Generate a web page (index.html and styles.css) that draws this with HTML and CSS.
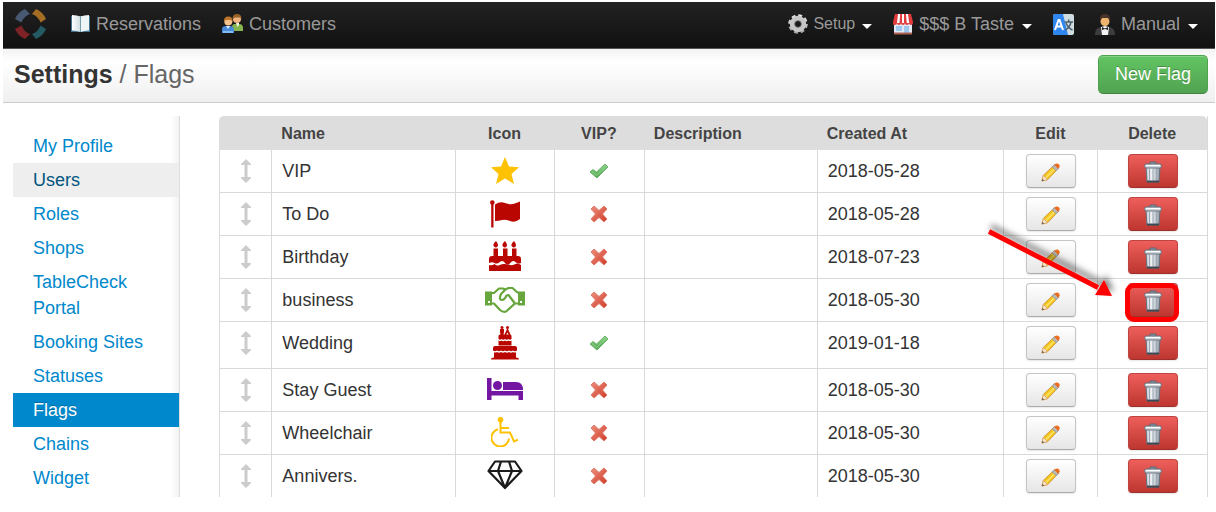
FILE: index.html
```html
<!DOCTYPE html>
<html lang="en">
<head>
<meta charset="utf-8">
<title>Settings / Flags</title>
<link rel="stylesheet" href="styles.css">
</head>
<body>
<svg class="defs" aria-hidden="true">
  <defs>
    <linearGradient id="g-tick" x1="0" y1="0" x2="0" y2="1"><stop offset="0" stop-color="#8fd48a"/><stop offset="1" stop-color="#4fa552"/></linearGradient>
    <linearGradient id="g-cross" x1="0" y1="0" x2="1" y2="1"><stop offset="0" stop-color="#ee9080"/><stop offset="1" stop-color="#cf3a28"/></linearGradient>
    <linearGradient id="g-can" x1="0" y1="0" x2="1" y2="0"><stop offset="0" stop-color="#c3ccd5"/><stop offset=".4" stop-color="#eef1f4"/><stop offset="1" stop-color="#8f9ba8"/></linearGradient>
    <linearGradient id="g-gear" x1="0" y1="0" x2="0" y2="1"><stop offset="0" stop-color="#e6e6e6"/><stop offset="1" stop-color="#a2a2a2"/></linearGradient>
    <linearGradient id="g-page" x1="0" y1="0" x2="1" y2="0"><stop offset="0" stop-color="#ffffff"/><stop offset="1" stop-color="#cfdde2"/></linearGradient>
    <filter id="f-shadow" x="-20%" y="-20%" width="140%" height="140%"><feDropShadow dx="2" dy="-5" stdDeviation="3" flood-color="#000" flood-opacity=".5"/></filter>
  </defs>
  <symbol id="move" viewBox="0 0 10 24"><path fill="#ccc" d="M5 0 10 5v1H6.500v12H10v1l-5 5-5-5v-1h3.500V6H0V5z"/></symbol>
  <symbol id="tick" viewBox="0 0 20 16"><path d="M1 9 4 6.500l3.500 2.500L16 1l3 3L8 15z" fill="url(#g-tick)" stroke="#6ab56a" stroke-linejoin="round"/><path d="m3 8.500 4.500 4L17 3.500" fill="none" stroke="#8fd088"/></symbol>
  <symbol id="cross" viewBox="0 0 18 18"><path d="M1 4 4 1l5 4.500L14 1l3 3-4.500 5 4.500 5-3 3-5-4.500L4 17l-3-3 4.500-5z" fill="url(#g-cross)" stroke="#e07a68" stroke-linejoin="round"/></symbol>
  <symbol id="pencil" viewBox="0 0 20 20"><path d="m1 19 1.500-6L14 2l4 4L7 17.500z" fill="#f3c31c" stroke="#d39a4a"/><path d="m5 15.500 9.500-9.500" stroke="#fae060" stroke-width="2"/><path d="M1 19l1.500-6 4.500 4.500z" fill="#fbe6cc" stroke="#d9a66c"/><path d="m1 19 .6-2.300L3.300 18.400z" fill="#555"/><path d="m11.800 4 2.700-2.500 4.200 4L16 8.200z" fill="#b9b9b9" stroke="#999"/><path d="m14 2 .8-.8Q17-.2 19 1.500q1.500 2 0 3.500l-1 1z" fill="#ee6c1f"/></symbol>
  <symbol id="trash" viewBox="0 0 18 22"><path d="M6 3.500V1h6v2.500" fill="#8b98a4" stroke="#5d6975"/><path d="m2 6 1 15h12l1-15z" fill="url(#g-can)" stroke="#64707c"/><path d="M5.500 8v11M9 8v11M12.500 8v11" stroke="#9aa6b1"/><path d="M3 20.500h12" stroke="#3d4852" stroke-width="2"/><rect x=".7" y="3" width="16.600" height="4" rx="1.500" fill="#ced6dc" stroke="#65717d"/><path d="M2 4.500h14" stroke="#fff"/></symbol>
</svg>

<nav class="navbar">
  <a class="logo" href="#" aria-label="Home">
    <svg width="32" height="32" viewBox="0 0 32 32"><path fill="#475973" d="M0 11Q3 4 10 1l5 5q-6 2-8.500 8.500z"/><path fill="#a56d24" d="M21 1q7 3 10 10l-5.500 3.500Q23 8 17 6z"/><path fill="#7e2325" d="M0 21q3 7 10 10l5-5q-6-2-8.500-8.500z"/><path fill="#245a63" d="M21 31q7-3 10-10l-5.500-3.500Q23 24 17 26z"/></svg>
  </a>
  <a class="nav-link" href="#">
    <svg width="19" height="18" viewBox="0 0 19 18"><path d="M0 1h19v16H0z" fill="#44758e"/><path d="M1 0q5 0 8.500 1.500V17Q6 15.500 1 15.500z" fill="url(#g-page)"/><path d="M18 0q-5 0-8.500 1.500V17q3.500-1.500 8.500-1.500z" fill="#edf5f6"/><path d="M9.500 1.500V17" stroke="#799eaa"/></svg>
    Reservations
  </a>
  <a class="nav-link" href="#">
    <svg width="21" height="20" viewBox="0 0 21 20"><path d="M10 17v-4q0-3 3-3h4q4 0 4 4v3z" fill="#86b550"/><path d="M14 9h3v2l-1.500 2z" fill="#f0f4e8"/><circle cx="15" cy="5" r="4" fill="#f0b581"/><path d="M10.500 5q0-5 4.500-5t4.500 5L18 3.500h-5z" fill="#9a6224"/><path d="M0 19v-4q0-3 4-3h4q4 0 4 4v3z" fill="#4889d8"/><path d="M1 18h10" stroke="#83baf5" stroke-width="2"/><path d="M4 12h4l-2 3z" fill="#dcecff"/><circle cx="6.300" cy="7.500" r="4" fill="#f6c08c"/><path d="M2 8q-.5-5.500 4.300-5.500T10.500 8L9 6H4z" fill="#bd752c"/></svg>
    Customers
  </a>
  <div class="nav-right">
    <a class="nav-link small" href="#">
      <svg width="20" height="20" viewBox="0 0 20 20"><circle cx="10" cy="10" r="8" fill="none" stroke="url(#g-gear)" stroke-width="3.500" stroke-dasharray="3.600 2.683"/><circle cx="10" cy="10" r="5.700" fill="none" stroke="#c6c6c6" stroke-width="5"/><circle cx="10" cy="10" r="3.500" fill="none" stroke="#858585"/></svg>
      Setup <span class="caret"></span>
    </a>
    <a class="nav-link" href="#">
      <svg width="20" height="21" viewBox="0 0 20 21"><path d="M1 8h18v12H1z" fill="#e2e9f5"/><path d="M3 12h6v5H3zM11 12h5v8h-5z" fill="#9fc8ee"/><path d="M1 19.500h18" stroke="#ad6050" stroke-width="2"/><path d="M2 0h16l2 8q0 3-2 3t-2-2q0 2-2 2t-2-2q0 2-2 2t-2-2q0 2-2 2t-2-2q0 2-2 2-3 0-2-3z" fill="#e23a3a"/><path d="M5 0h2.200L6.500 9H4zM9 0h2v9H9zM13 0h2l1.200 9h-2.500z" fill="#fff"/></svg>
      $$$ B Taste <span class="caret"></span>
    </a>
    <a class="nav-link" href="#" aria-label="Language">
      <svg width="21" height="21" viewBox="0 0 21 21"><rect width="21" height="21" rx="2" fill="#cfdce0"/><path d="M2 0h8l5 21H2q-2 0-2-2V2Q0 0 2 0z" fill="#2f86ee"/><path d="M2 16 5.500 6h1L10 16M3.500 12.500h5" fill="none" stroke="#fff" stroke-width="2"/><path d="M11.500 8H20M15.700 5.500V8M18 8q-1 5-5.500 8M13 9q2 5 6.500 7" fill="none" stroke="#4a5f6c" stroke-width="1.500"/></svg>
    </a>
    <a class="nav-link" href="#">
      <svg width="20" height="21" viewBox="0 0 20 21"><path d="M0 20q0-6 6-7h8q6 1 6 7v1H0z" fill="#3d3d40"/><path d="m6 13 4-1 4 1-1 8H7z" fill="#f4f4f4"/><path d="m7 13 3 1.500 3-1.500v3l-3-1-3 1z" fill="#222"/><circle cx="10" cy="7.500" r="4.500" fill="#efb56c"/><path d="M5 7q-1-7 5-7t5 7l-2-3H7z" fill="#47352b"/></svg>
      Manual <span class="caret"></span>
    </a>
  </div>
</nav>

<header class="page-head">
  <h1><strong>Settings</strong> / Flags</h1>
  <button class="btn btn-new" type="button">New Flag</button>
</header>

<div class="layout">
  <aside class="sidebar">
    <a href="#">My Profile</a>
    <a class="hover" href="#">Users</a>
    <a href="#">Roles</a>
    <a href="#">Shops</a>
    <a href="#">TableCheck Portal</a>
    <a href="#">Booking Sites</a>
    <a href="#">Statuses</a>
    <a class="active" href="#">Flags</a>
    <a href="#">Chains</a>
    <a href="#">Widget</a>
  </aside>

  <main class="content">
    <table class="flags">
      <colgroup><col class="c-move"><col class="c-name"><col class="c-icon"><col class="c-vip"><col class="c-desc"><col class="c-date"><col class="c-edit"><col class="c-del"></colgroup>
      <thead>
        <tr><th></th><th>Name</th><th class="mid">Icon</th><th class="mid">VIP?</th><th>Description</th><th>Created At</th><th class="mid">Edit</th><th class="mid">Delete</th></tr>
      </thead>
      <tbody>
        <tr>
          <td><span class="cell mid"><svg width="10" height="24"><use href="#move"/></svg></span></td>
          <td>VIP</td>
          <td><span class="cell mid"><svg width="28" height="28" viewBox="0 0 28 28"><path fill="#fcc203" d="m14 0 4 9.500 10 .8-7.500 6.700L23 27l-9-5.500L5 27l2.500-10L0 10.300l10-.8z"/></svg></span></td>
          <td><span class="cell mid"><svg width="20" height="16"><use href="#tick"/></svg></span></td>
          <td></td><td>2018-05-28</td>
          <td><span class="cell mid"><button class="btn" type="button" aria-label="Edit"><svg width="19" height="19"><use href="#pencil"/></svg></button></span></td>
          <td><span class="cell mid"><button class="btn btn-del" type="button" aria-label="Delete"><svg width="18" height="22"><use href="#trash"/></svg></button></span></td>
        </tr>
        <tr>
          <td><span class="cell mid"><svg width="10" height="24"><use href="#move"/></svg></span></td>
          <td>To Do</td>
          <td><span class="cell mid"><svg width="30" height="28" viewBox="0 0 30 28"><g fill="#ba0600"><circle cx="2.300" cy="2.500" r="2.300"/><path d="M1.200 4h2.300v23.500H1.200zM5 4.500q5-3.500 10-1.500t9 .8 6-2.300V19q-5 4-10 2t-8-1-7 1z"/></g></svg></span></td>
          <td><span class="cell mid"><svg width="18" height="18"><use href="#cross"/></svg></span></td>
          <td></td><td>2018-05-28</td>
          <td><span class="cell mid"><button class="btn" type="button" aria-label="Edit"><svg width="19" height="19"><use href="#pencil"/></svg></button></span></td>
          <td><span class="cell mid"><button class="btn btn-del" type="button" aria-label="Delete"><svg width="18" height="22"><use href="#trash"/></svg></button></span></td>
        </tr>
        <tr>
          <td><span class="cell mid"><svg width="10" height="24"><use href="#move"/></svg></span></td>
          <td>Birthday</td>
          <td><span class="cell mid raised"><svg width="32" height="30" viewBox="0 0 32 30"><g fill="#ba0600"><path d="M7 0q3 3.500 1.500 5.500t-3.500 0T7 0zM16 0q3 3.500 1.500 5.500t-3.500 0T16 0zM25 0q3 3.500 1.500 5.500t-3.500 0T25 0z"/><path d="M4.500 7.500h4.500v7.500h5V7.500h4.500v7.500h4.500V7.500h4.500v7.500H29q3 0 3 3v4q-3 1.500-5.500-1t-5.300 1-5.200 0-5.200-1-5.300 1T0 22v-4q0-3 3-3h1.500z"/><path d="M0 24q3 1 5.500-1 2.500 2.500 5.300 1t5.200-1 5.300 1 5.200-1 5.500 1v6H0z"/></g></svg></span></td>
          <td><span class="cell mid"><svg width="18" height="18"><use href="#cross"/></svg></span></td>
          <td></td><td>2018-07-23</td>
          <td><span class="cell mid"><button class="btn" type="button" aria-label="Edit"><svg width="19" height="19"><use href="#pencil"/></svg></button></span></td>
          <td><span class="cell mid"><button class="btn btn-del" type="button" aria-label="Delete"><svg width="18" height="22"><use href="#trash"/></svg></button></span></td>
        </tr>
        <tr>
          <td><span class="cell mid"><svg width="10" height="24"><use href="#move"/></svg></span></td>
          <td>business</td>
          <td><span class="cell mid"><svg width="40" height="26" viewBox="0 0 40 26"><path fill="#67a63c" fill-rule="evenodd" d="M0 4.500h7v14H0zM33 4.500h7v14h-7zM3 14v2h2v-2zM35 14v2h2v-2z"/><path d="M6 6h3l5-4.500h4l2.500 1 3-1.500h4L33 6M6 16.500h3l6 6.500q3 2.500 6 1.500l9-8H34M20.500 2.500 16 7q-2.500 6 1 6 2.500 0 4.500-4.500l2-.5 6.500 8.500M23.500 8l1 1" fill="none" stroke="#67a63c" stroke-width="2.200" stroke-linejoin="round"/></svg></span></td>
          <td><span class="cell mid"><svg width="18" height="18"><use href="#cross"/></svg></span></td>
          <td></td><td>2018-05-30</td>
          <td><span class="cell mid"><button class="btn" type="button" aria-label="Edit"><svg width="19" height="19"><use href="#pencil"/></svg></button></span></td>
          <td><span class="cell mid callout"><button class="btn btn-del" type="button" aria-label="Delete"><svg width="18" height="22"><use href="#trash"/></svg></button>
            <span class="ring"></span>
            <svg class="arrow" width="126" height="70" viewBox="0 0 126 70"><g filter="url(#f-shadow)"><path d="m2 2.500 109 56" stroke="#f00" stroke-width="5"/><path fill="#f00" d="m125 67-17-1 9-15z"/></g></svg></span></td>
        </tr>
        <tr class="tall">
          <td><span class="cell mid"><svg width="10" height="24"><use href="#move"/></svg></span></td>
          <td>Wedding</td>
          <td><span class="cell mid"><svg width="28" height="34" viewBox="0 0 28 34"><g fill="#ba0600"><circle cx="11" cy="1.500" r="1.500"/><circle cx="16.500" cy="1.500" r="1.500"/><path d="M9 3h4v3l-.5 2.500h-3L9 6zM16 3h1l2.500 5.500h-1.800l-1.200-2-1.200 2h-1.800zM9 8.500h10q1.500 0 1.500 1.500v3q-1.500 1.500-3.200 0-1.600 1.500-3.300 0-1.700 1.500-3.300 0-1.700 1.500-3.200 0v-3q0-1.500 1.500-1.500z"/><path d="M7.500 14.500q2 1 3.200 0 1.600 1.500 3.300 0 1.700 1.500 3.300 0 1.200 1 3.200 0v5H7.500zM4 20h20q2 0 2 2v2.500q-2 1.500-4 0-2 1.500-4 0-2 1.500-4 0-2 1.500-4 0-2 1.500-4 0-2 1.500-4 0V22q0-2 2-2z"/><path d="M3 26.200q1.500.8 3-.2 2 1.500 4 0 2 1.500 4 0 2 1.500 4 0 2 1.500 4 0 1.500 1 3 .2v5.300q3 0 3 2H0q0-2 3-2z"/></g></svg></span></td>
          <td><span class="cell mid"><svg width="20" height="16"><use href="#tick"/></svg></span></td>
          <td></td><td>2019-01-18</td>
          <td><span class="cell mid"><button class="btn" type="button" aria-label="Edit"><svg width="19" height="19"><use href="#pencil"/></svg></button></span></td>
          <td><span class="cell mid"><button class="btn btn-del" type="button" aria-label="Delete"><svg width="18" height="22"><use href="#trash"/></svg></button></span></td>
        </tr>
        <tr>
          <td><span class="cell mid"><svg width="10" height="24"><use href="#move"/></svg></span></td>
          <td>Stay Guest</td>
          <td><span class="cell mid raised"><svg width="36" height="26" viewBox="0 0 36 26"><g fill="#7317a3"><path d="M0 2h4.500v13H36v9h-4.500v-4.500h-27V24H0z"/><circle cx="10.500" cy="9.500" r="4.500"/><path d="M16 6h13q7 0 7 8H16z"/></g></svg></span></td>
          <td><span class="cell mid"><svg width="18" height="18"><use href="#cross"/></svg></span></td>
          <td></td><td>2018-05-30</td>
          <td><span class="cell mid"><button class="btn" type="button" aria-label="Edit"><svg width="19" height="19"><use href="#pencil"/></svg></button></span></td>
          <td><span class="cell mid"><button class="btn btn-del" type="button" aria-label="Delete"><svg width="18" height="22"><use href="#trash"/></svg></button></span></td>
        </tr>
        <tr>
          <td><span class="cell mid"><svg width="10" height="24"><use href="#move"/></svg></span></td>
          <td>Wheelchair</td>
          <td><span class="cell mid raised"><svg width="28" height="30" viewBox="0 0 28 30"><circle cx="9.500" cy="2.800" r="2.800" fill="#fcc203"/><path d="M9.500 4v11.500H19l4 9 4-1.800M10 11h8M7 12.200a8.800 8.800 0 1 0 11 9.500" fill="none" stroke="#fcc203" stroke-width="2"/></svg></span></td>
          <td><span class="cell mid"><svg width="18" height="18"><use href="#cross"/></svg></span></td>
          <td></td><td>2018-05-30</td>
          <td><span class="cell mid"><button class="btn" type="button" aria-label="Edit"><svg width="19" height="19"><use href="#pencil"/></svg></button></span></td>
          <td><span class="cell mid"><button class="btn btn-del" type="button" aria-label="Delete"><svg width="18" height="22"><use href="#trash"/></svg></button></span></td>
        </tr>
        <tr>
          <td><span class="cell mid"><svg width="10" height="24"><use href="#move"/></svg></span></td>
          <td>Annivers.</td>
          <td><span class="cell mid raised"><svg width="36" height="30" viewBox="0 0 36 30"><path d="M8 1.500h20l6.500 9.500L18 28 1.500 11zM1.500 11h33M14 1.500 11 11l7 17 7-17-3-9.500" fill="none" stroke="#1b1b1b" stroke-width="2.200" stroke-linejoin="round"/></svg></span></td>
          <td><span class="cell mid"><svg width="18" height="18"><use href="#cross"/></svg></span></td>
          <td></td><td>2018-05-30</td>
          <td><span class="cell mid"><button class="btn" type="button" aria-label="Edit"><svg width="19" height="19"><use href="#pencil"/></svg></button></span></td>
          <td><span class="cell mid"><button class="btn btn-del" type="button" aria-label="Delete"><svg width="18" height="22"><use href="#trash"/></svg></button></span></td>
        </tr>
      </tbody>
    </table>
  </main>
</div>
</body>
</html>
```
FILE: styles.css
```css
* { box-sizing: border-box; }

body {
  margin: 2px 1px 16px 3px;
  background: #fff;
  color: #333;
  font-family: "Liberation Sans", Arial, sans-serif;
  font-size: 18px;
}

a { text-decoration: none; }
svg { display: block; flex: none; }
.defs { position: absolute; width: 0; height: 0; }

/* Top navigation */
.navbar {
  display: flex;
  align-items: center;
  gap: 21px;
  height: 47px;
  padding: 0 17px 2px 12px;
  background: linear-gradient(#222, #111);
  border-bottom: 1px solid #555;
}
.logo { margin-right: 3px; }
.nav-link {
  display: flex;
  align-items: center;
  gap: 6px;
  color: #999;
  white-space: nowrap;
}
.nav-link.small { gap: 5px; font-size: 16px; }
.nav-right {
  display: flex;
  align-items: center;
  gap: 21px;
  margin-left: auto;
}
.caret {
  margin: 5px 0 0 2px;
  border: 5px solid transparent;
  border-top-color: #fff;
  border-bottom: 0;
}

/* Page heading */
.page-head {
  display: flex;
  align-items: center;
  justify-content: space-between;
  height: 54px;
  padding: 0 7px 2px 11px;
  background: linear-gradient(#f3f3f3, #fff 25%, #efefef);
  border-bottom: 1px solid #ccc;
}
h1 {
  margin: 0;
  color: #666;
  font-size: 25px;
  font-weight: 400;
}
h1 strong { color: #333; }

/* Buttons */
.btn {
  display: flex;
  align-items: center;
  justify-content: center;
  width: 50px;
  height: 34px;
  padding: 2px 0 0;
  border: 1px solid #c4c4c4;
  border-bottom-color: #aaa;
  border-radius: 4px;
  background: linear-gradient(#fff, #e6e6e6);
  box-shadow: 0 1px 2px rgba(0, 0, 0, .1);
  font: inherit;
}
.btn-del {
  border-color: #bd4440 #bd4440 #9e2f2b;
  background: linear-gradient(#ee5f5b, #bd362f);
}
.btn-new {
  width: auto;
  height: 39px;
  padding: 0 16px;
  border-color: #4fa34f #4fa34f #418441;
  border-radius: 5px;
  background: linear-gradient(#62c462, #51a351);
  box-shadow: inset 0 1px 0 rgba(255, 255, 255, .25);
  color: #fff;
  text-shadow: 0 -1px 0 rgba(0, 0, 0, .25);
}

/* Body */
.layout { display: flex; padding-top: 13px; }
.sidebar {
  flex: none;
  width: 177px;
  padding: 13px 0 0 10px;
  border-right: 1px solid #ddd;
  background: linear-gradient(to left, #f2f2f2, #fff 8px);
}
.sidebar a {
  display: block;
  padding: 4px 20px;
  color: #08c;
  line-height: 26px;
}
.sidebar .hover { background: #eee; color: #005580; }
.sidebar .active {
  background: #08c;
  color: #fff;
  text-shadow: 0 -1px 0 rgba(0, 0, 0, .2);
}
.content { flex: 1; min-width: 0; padding: 0 7px 0 39px; }

/* Flag table */
.flags {
  width: 100%;
  table-layout: fixed;
  border-spacing: 0;
  border: 0 solid #d9d9d9;
  border-right-width: 1px;
}
.c-move { width: 5.300%; }
.c-name { width: 18.600%; }
.c-icon { width: 10%; }
.c-vip { width: 9.100%; }
.c-desc { width: 17.500%; }
.c-date { width: 18.900%; }
.c-edit { width: 9.500%; }
.c-del { width: 11.100%; }
th {
  height: 34px;
  padding: 1px 10px 0;
  background: #ddd;
  color: #444;
  font-size: 16px;
  line-height: 20px;
  text-align: left;
}
th.mid { text-align: center; }
th:first-child { border-top-left-radius: 5px; }
th:last-child { border-top-right-radius: 5px; }
td {
  height: 43px;
  padding: 4px 10px;
  border-left: 1px solid #d9d9d9;
  border-bottom: 1px solid #d9d9d9;
  line-height: 34px;
  vertical-align: top;
}
.tall td { height: 47px; }
tbody tr:last-child td { height: 42px; padding-bottom: 3px; border-bottom: 0; }
.cell {
  display: flex;
  align-items: center;
  justify-content: center;
  height: 34px;
}
.raised { padding-bottom: 3px; }

/* Pointer to the delete button */
.callout { position: relative; }
.ring {
  position: absolute;
  top: 0;
  left: calc(50% - 28px);
  width: 54px;
  height: 39px;
  border: 5px solid #f00;
  border-radius: 9px;
}
.arrow {
  position: absolute;
  right: calc(50% + 40px);
  bottom: 18px;
  overflow: visible;
}
```
